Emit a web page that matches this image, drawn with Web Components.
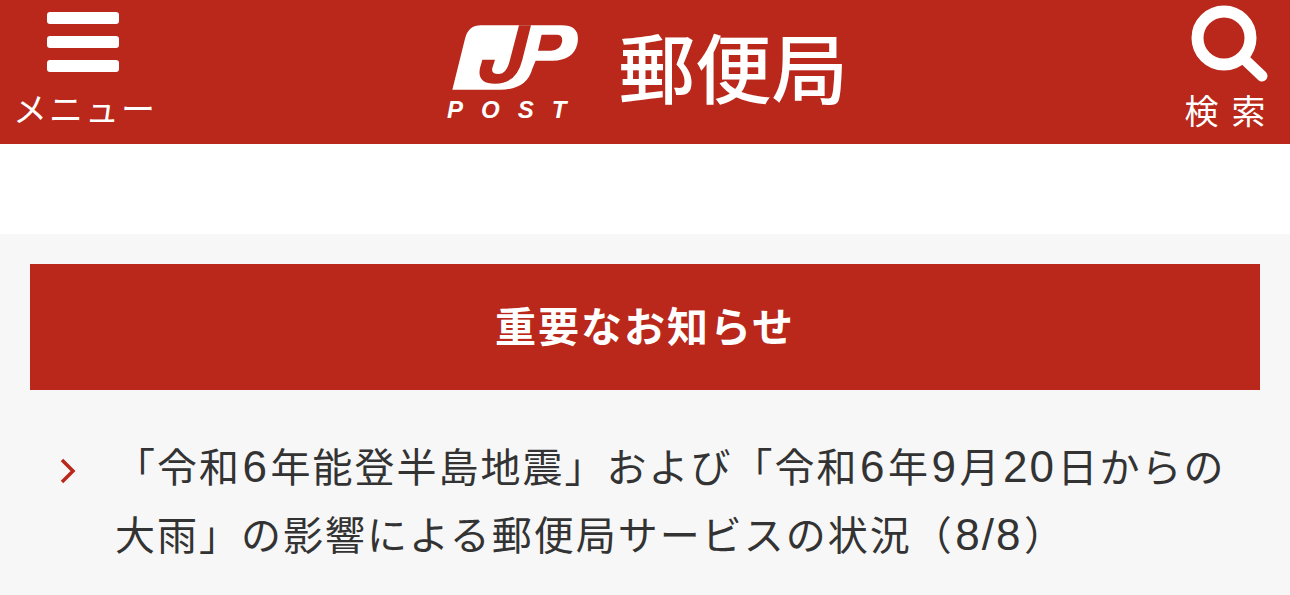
<!DOCTYPE html>
<html lang="ja">
<head>
<meta charset="utf-8">
<title>郵便局</title>
<style>
  html, body { margin: 0; padding: 0; background: #f7f7f7; }
  body { font-family: "Noto Sans CJK JP", "Noto Sans", sans-serif; color: #333; overflow: hidden; }
  /* digits sit larger next to the kana in the original */
  .n { font-family: "Liberation Sans", sans-serif; font-size: 44px; margin: 0 1.5px; }
</style>
</head>
<body>
<site-header>
  <menu-button slot="left">メニュー</menu-button>
  <post-logo slot="center">郵便局</post-logo>
  <search-button slot="right">検索</search-button>
</site-header>
<notice-panel>
  <span slot="title">重要なお知らせ</span>
  <notice-item>「令和<span class="n">6</span>年能登半島地震」および「令和<span class="n">6</span>年<span class="n">9</span>月<span class="n">20</span>日からの<br>大雨」の影響による郵便局サービスの状況（<span class="n">8/8</span>）</notice-item>
</notice-panel>

<script>
// Small helper so each element just declares its shadow markup
class Base extends HTMLElement {
  constructor() {
    super();
    this.attachShadow({ mode: 'open' });
    this.shadowRoot.innerHTML = this.constructor.markup;
  }
}

class SiteHeader extends Base {
  static markup = `
    <style>
      :host { display: block; }
      .bar { display: grid; grid-template-columns: 1fr auto 1fr; height: 144px; background: #b9281b; color: #fff; }
      .end { justify-self: end; }
      .white { height: 90px; background: #fff; }
    </style>
    <div class="bar">
      <div><slot name="left"></slot></div>
      <div><slot name="center"></slot></div>
      <div class="end"><slot name="right"></slot></div>
    </div>
    <div class="white"></div>
  `;
}

class MenuButton extends Base {
  static markup = `
    <style>
      :host { display: flex; flex-direction: column; align-items: center; width: 166px; }
      .bars { display: flex; flex-direction: column; gap: 12px; margin-top: 12px; }
      .bars i { display: block; width: 72px; height: 12px; border-radius: 3px; background: #fff; }
      .label { margin-top: 12px; font-size: 34px; line-height: 48px; letter-spacing: 2px; margin-left: 4px; white-space: nowrap; }
    </style>
    <div class="bars"><i></i><i></i><i></i></div>
    <div class="label"><slot></slot></div>
  `;
}

class SearchButton extends Base {
  static markup = `
    <style>
      :host { display: flex; flex-direction: column; align-items: center; width: 106px; margin-right: 12px; }
      svg { display: block; width: 84px; height: 84px; margin: 3px 0 0 8px; }
      .label { margin-top: -1px; font-size: 34px; line-height: 48px; letter-spacing: 13px; margin-right: -13px; white-space: nowrap; }
    </style>
    <svg viewBox="0 0 84 84" fill="none" stroke="#fff">
      <circle cx="37" cy="35" r="26.5" stroke-width="12"/>
      <path d="M55 54 L75 73" stroke-width="11" stroke-linecap="round"/>
    </svg>
    <div class="label"><slot></slot></div>
  `;
}

class PostLogo extends Base {
  static markup = `
    <style>
      :host { display: flex; align-items: flex-start; gap: 33.5px; margin-left: 3px; }
      .mark { display: flex; flex-direction: column; width: 140px; margin-top: 18px; }
      svg { display: block; width: 140px; height: 80px; }
      .post { padding-left: 2px; font: italic 700 24px/24px "Liberation Sans", sans-serif; letter-spacing: 18px; white-space: nowrap; }
      .name { margin-top: 11px; font-size: 76.5px; line-height: 108px; font-weight: 500; white-space: nowrap; }
    </style>
    <div class="mark">
      <svg viewBox="0 0 420 240">
        <path fill="#fff" fill-rule="evenodd" d="M22 215 L60 62 Q70 22 108 22 L350 22 Q408 22 397 78 Q385 128 322 128 L272 128 L262 152 Q245 215 165 215 Z
          M290 50 L279 98 L318 98 Q345 98 351 73 Q355 50 335 50 Z"/>
        <path fill="#b9281b" d="M222 22 L258 22 L232 125 Q215 197 150 197 Q95 197 105 150 L112 125 L150 125 L142 150 Q138 168 160 168 Q185 168 195 125 Z"/>
      </svg>
      <div class="post">POST</div>
    </div>
    <div class="name"><slot></slot></div>
  `;
}

class NoticePanel extends Base {
  static markup = `
    <style>
      :host { display: block; padding: 30px 30px 0; background: #f7f7f7; }
      h2 { margin: 0; box-sizing: border-box; height: 126px; padding-bottom: 6px; display: flex; align-items: center; justify-content: center; background: #b9281b; color: #fff;
           font-size: 41px; font-weight: 700; letter-spacing: 2px; }
      .list { padding-top: 44px; }
    </style>
    <h2><slot name="title"></slot></h2>
    <div class="list"><slot></slot></div>
  `;
}

class NoticeItem extends Base {
  static markup = `
    <style>
      :host { display: flex; padding-left: 30px; }
      svg { flex: none; width: 16px; height: 26px; margin-top: 24px; }
      .text { margin-left: 39px; margin-top: -2px; width: 1130px; font-size: 40px; line-height: 66px; letter-spacing: 2px; color: #333; }
    </style>
    <svg viewBox="0 0 16 26" fill="none" stroke="#b9281b" stroke-width="3.5"><path d="M2 2 L13 13 L2 24"/></svg>
    <div class="text"><slot></slot></div>
  `;
}

customElements.define('site-header', SiteHeader);
customElements.define('menu-button', MenuButton);
customElements.define('search-button', SearchButton);
customElements.define('post-logo', PostLogo);
customElements.define('notice-panel', NoticePanel);
customElements.define('notice-item', NoticeItem);
</script>
</body>
</html>
